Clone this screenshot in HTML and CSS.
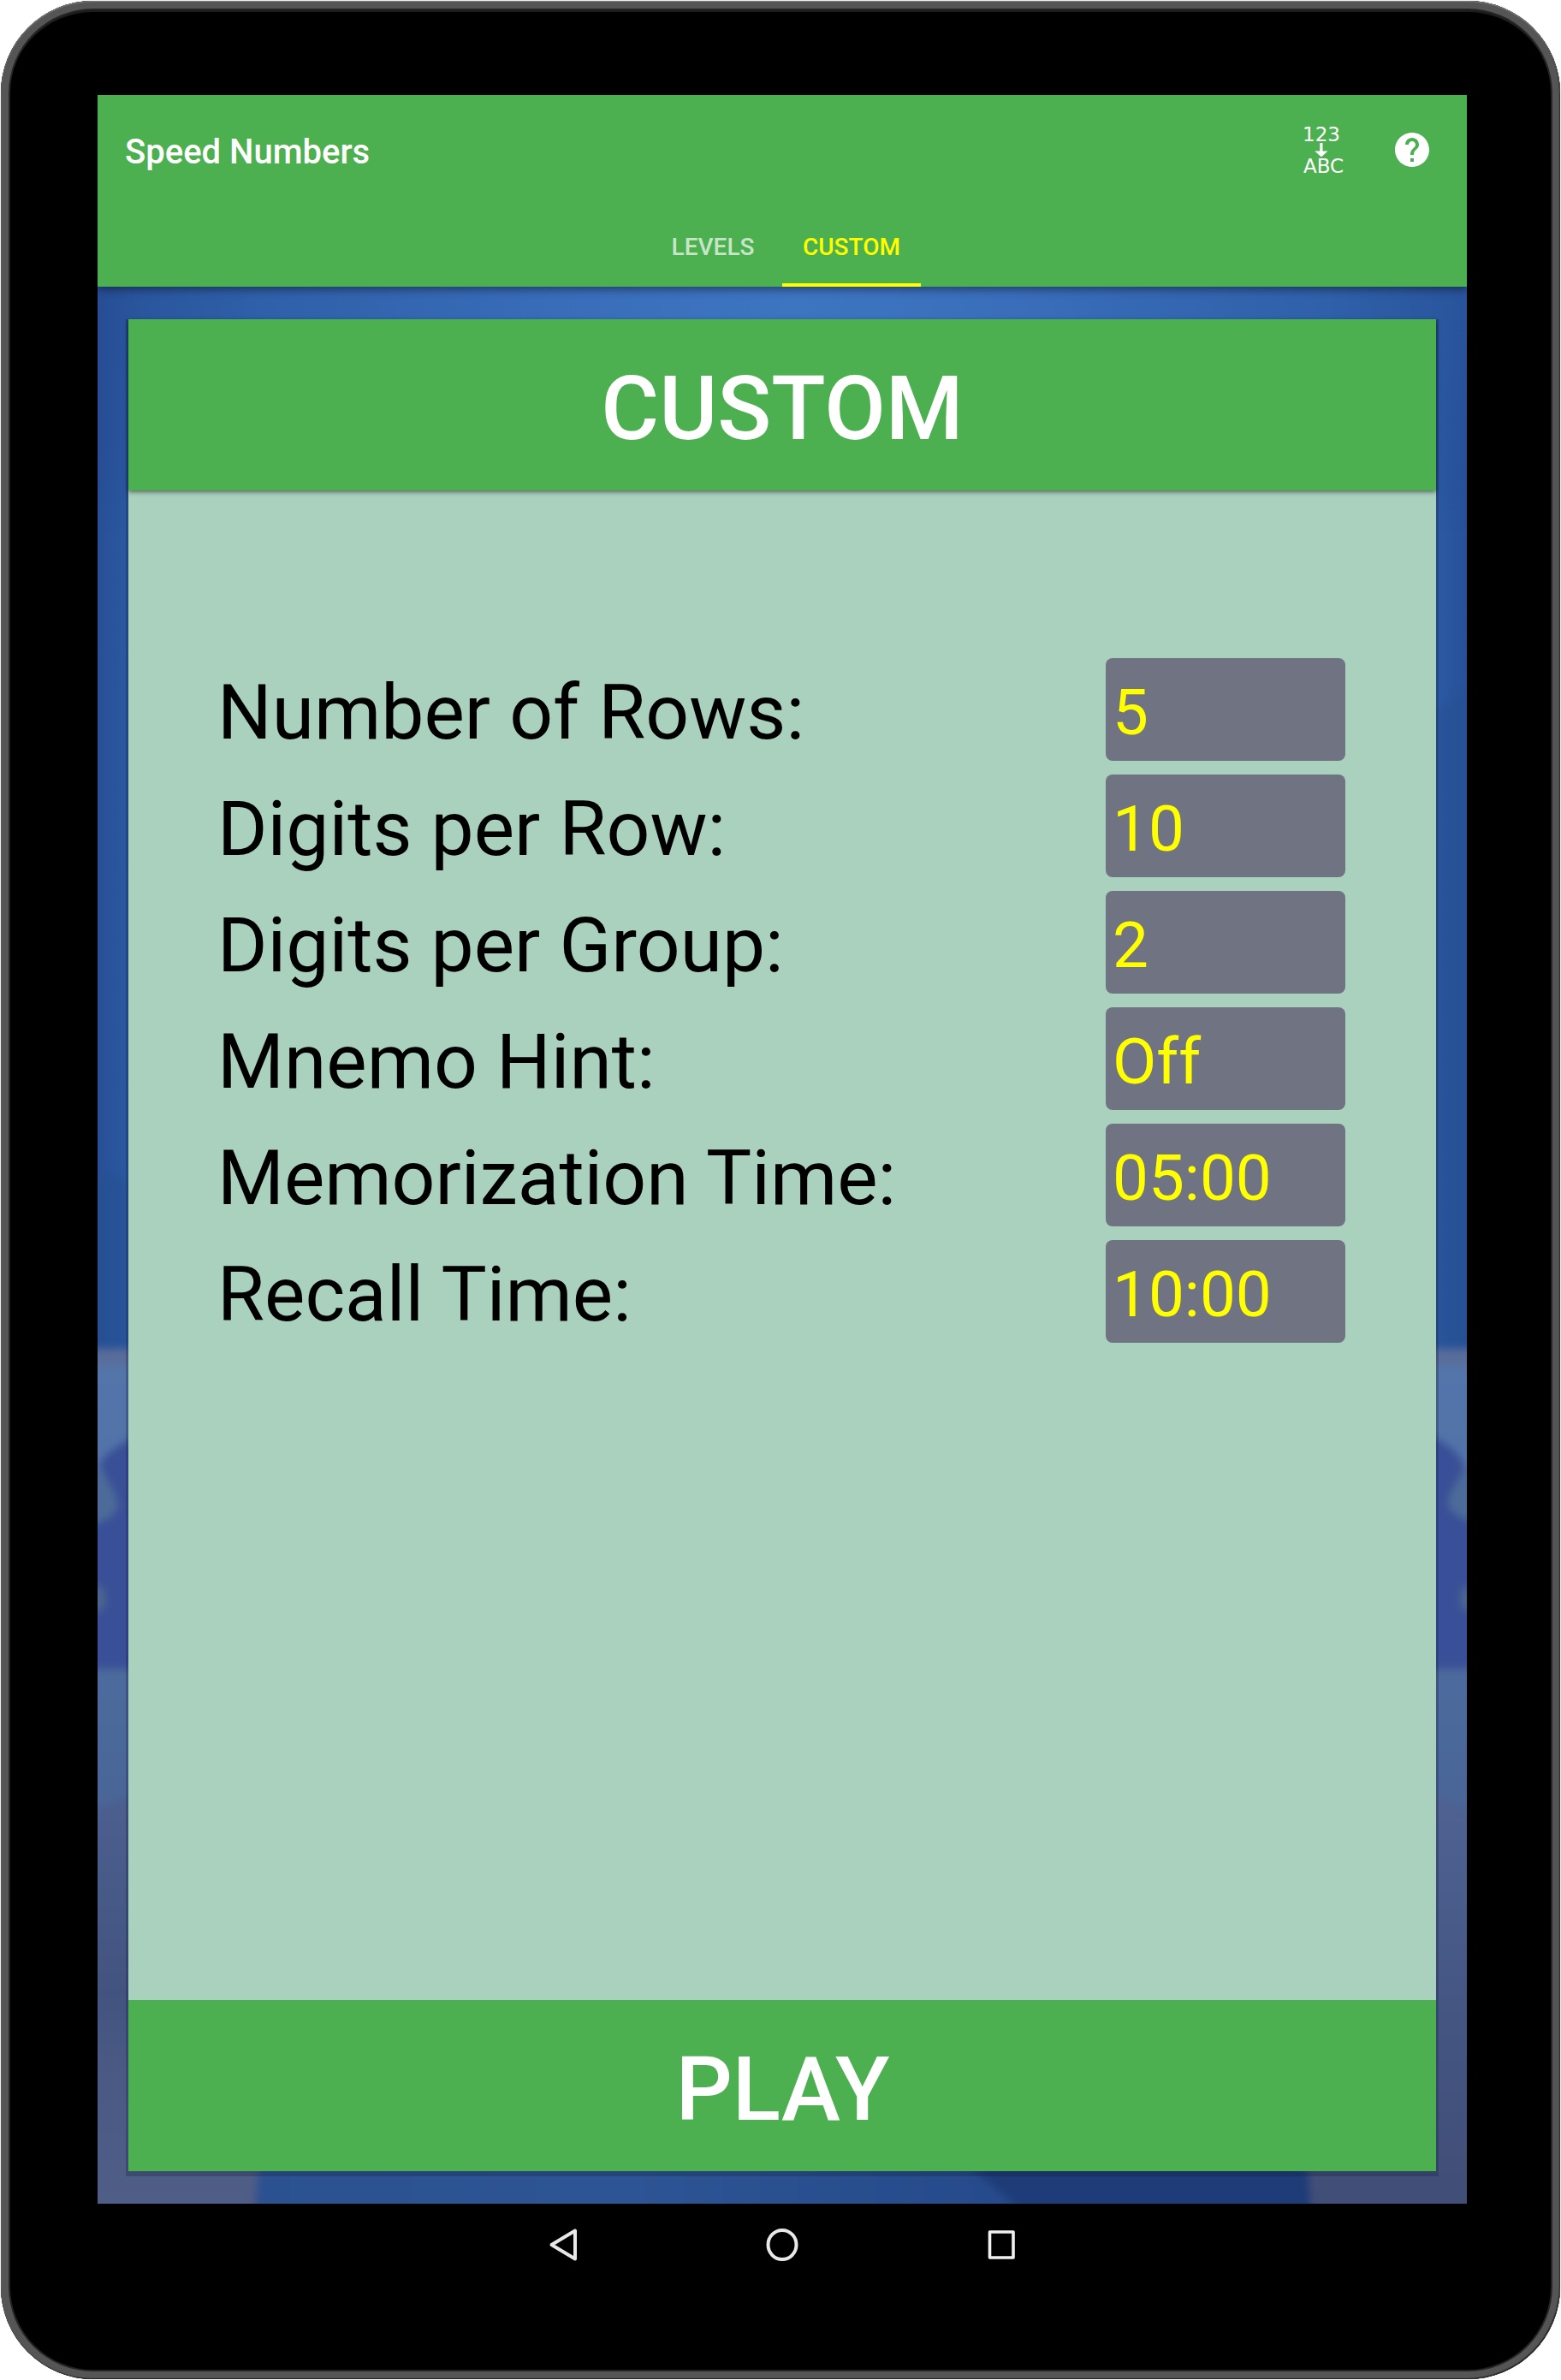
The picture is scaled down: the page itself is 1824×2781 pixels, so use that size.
FILE: index.html
```html
<!DOCTYPE html>
<html lang="en">
<head>
<meta charset="utf-8">
<title>Speed Numbers</title>
<link rel="stylesheet" href="styles.css">
</head>
<body>
<div class="device">
  <div class="screen">
    <header class="appbar">
      <div class="toolbar">
        <h1 class="app-title">Speed Numbers</h1>
        <svg class="icon-mnemo" width="56" height="72" viewBox="0 0 56 72" fill="#fff">
          <text x="3" y="26">123</text>
          <path d="M23.300 28h3.200V37.500h6L24.900 44.500l-7.600-7h6z"/>
          <text x="4" y="63">ABC</text>
        </svg>
        <svg class="icon-help" width="48" height="48" viewBox="0 0 24 24" fill="#fff">
          <path d="M12 2C6.48 2 2 6.48 2 12s4.48 10 10 10 10-4.48 10-10S17.52 2 12 2zm1 17h-2v-2h2v2zm2.070-7.750l-.9.920C13.450 12.900 13 13.500 13 15h-2v-.5c0-1.100.45-2.100 1.170-2.830l1.240-1.260c.37-.36.59-.86.59-1.410 0-1.100-.9-2-2-2s-2 .9-2 2H8c0-2.210 1.790-4 4-4s4 1.790 4 4c0 .88-.36 1.680-.93 2.250z"/>
        </svg>
      </div>
      <nav class="tabs">
        <a class="tab">LEVELS</a>
        <a class="tab tab-active">CUSTOM</a>
      </nav>
    </header>
    <main class="content">
      <svg class="wallpaper" viewBox="114 335 1600 2240" preserveAspectRatio="none">
        <defs>
          <radialGradient id="sky" gradientUnits="userSpaceOnUse" cx="930" cy="350" r="830">
            <stop offset="0" stop-color="#3d75c1"/>
            <stop offset=".3" stop-color="#3a6ebb"/>
            <stop offset=".75" stop-color="#2f60a9"/>
            <stop offset=".92" stop-color="#2a569e"/>
            <stop offset="1" stop-color="#264b92"/>
          </radialGradient>
          <linearGradient id="edge" x1="0" x2="1" y1="0" y2="0">
            <stop offset="0" stop-color="#284f96"/>
            <stop offset=".022" stop-color="#2b59a1"/>
            <stop offset=".978" stop-color="#2c5aa3"/>
            <stop offset="1" stop-color="#275097"/>
          </linearGradient>
          <linearGradient id="skyFade" gradientUnits="userSpaceOnUse" x1="0" x2="0" y1="370" y2="620">
            <stop offset="0" stop-color="#fff"/>
            <stop offset="1" stop-color="#000"/>
          </linearGradient>
          <mask id="skyMask" maskUnits="userSpaceOnUse" x="114" y="335" width="1600" height="300">
            <rect x="114" y="335" width="1600" height="300" fill="url(#skyFade)"/>
          </mask>
          <linearGradient id="ground" x1="0" x2="0" y1="0" y2="1">
            <stop offset="0" stop-color="#5375ab"/>
            <stop offset=".2" stop-color="#5273a8"/>
            <stop offset="1" stop-color="#486394"/>
          </linearGradient>
          <linearGradient id="hill" x1="0" x2="0" y1="0" y2="1">
            <stop offset="0" stop-color="#4c5f8f"/>
            <stop offset=".45" stop-color="#42537f"/>
            <stop offset=".6" stop-color="#495984"/>
            <stop offset="1" stop-color="#515f87"/>
          </linearGradient>
          <linearGradient id="hillRight" x1="0" x2="0" y1="0" y2="1">
            <stop offset="0" stop-color="#4f6292"/>
            <stop offset=".5" stop-color="#445582"/>
            <stop offset="1" stop-color="#404c74"/>
          </linearGradient>
          <linearGradient id="floor" x1="0" x2="1" y1="0" y2="0">
            <stop offset="0" stop-color="#2b5190"/>
            <stop offset=".35" stop-color="#2d5494"/>
            <stop offset=".75" stop-color="#25498a"/>
            <stop offset="1" stop-color="#1d3b77"/>
          </linearGradient>
          <filter id="soft" x="-20%" y="-20%" width="140%" height="140%" color-interpolation-filters="sRGB"><feGaussianBlur stdDeviation="5"/></filter>
        </defs>
        <rect x="114" y="335" width="1600" height="1260" fill="url(#edge)"/>
        <rect x="114" y="335" width="1600" height="300" fill="url(#sky)" mask="url(#skyMask)"/>
        <g filter="url(#soft)">
          <path d="M100 1360 L150 1380 V1600 H100z M1730 800 L1678 830 V1600 H1730z" fill="#265092" opacity=".55"/>
          <rect x="90" y="1576" width="1650" height="600" fill="url(#ground)"/>
          <rect x="90" y="1576" width="1650" height="20" fill="#596d9a"/>
          <path d="M180 1672 C145 1682 114 1700 116 1720 L100 1740 V1950 H180z M1650 1670 C1685 1680 1712 1700 1712 1720 L1730 1740 V1950 H1650z" fill="#394f97"/>
          <path d="M100 1715 H120 C126 1735 138 1742 138 1762 C130 1776 118 1780 100 1782z M1730 1715 H1710 C1702 1735 1690 1745 1692 1760 C1700 1772 1710 1778 1730 1778z" fill="#4c6b99"/>
          <ellipse cx="114" cy="1868" rx="10" ry="16" fill="#4b668f"/>
          <ellipse cx="1714" cy="1868" rx="8" ry="15" fill="#4b678f"/>
        </g>
        <g filter="url(#soft)">
          <path d="M90 2118 Q130 2112 160 2095 H320 V2620 H90z" fill="url(#hill)"/>
          <path d="M1740 2125 Q1700 2110 1670 2095 H1430 V2620 H1740z" fill="url(#hillRight)"/>
          <path d="M306 2500 H1526 Q1528 2540 1534 2620 H294z" fill="url(#floor)"/>
          <path d="M1120 2520 Q1160 2555 1240 2620 H1534 L1524 2500z" fill="#1d3c78"/>
        </g>
      </svg>
      <section class="card">
        <h2 class="card-title">CUSTOM</h2>
        <div class="settings">
          <div class="row"><span class="label">Number of Rows:</span><span class="value">5</span></div>
          <div class="row"><span class="label">Digits per Row:</span><span class="value">10</span></div>
          <div class="row"><span class="label">Digits per Group:</span><span class="value">2</span></div>
          <div class="row"><span class="label">Mnemo Hint:</span><span class="value">Off</span></div>
          <div class="row"><span class="label">Memorization Time:</span><span class="value">05:00</span></div>
          <div class="row"><span class="label">Recall Time:</span><span class="value">10:00</span></div>
        </div>
        <div class="play">PLAY</div>
      </section>
    </main>
  </div>
  <div class="navbar">
    <svg width="34" height="40" viewBox="0 0 34 40" fill="none" stroke="#e8e8e8" stroke-width="4" stroke-linejoin="round"><path d="M31 3.500V36.500L3.500 20z"/></svg>
    <svg width="38" height="40" viewBox="0 0 38 40" fill="none" stroke="#e8e8e8" stroke-width="4"><ellipse cx="19" cy="20" rx="16.500" ry="17"/></svg>
    <svg width="34" height="40" viewBox="0 0 34 40" fill="none" stroke="#f0f0f0" stroke-width="3.600" stroke-linejoin="round"><rect x="3.500" y="5" width="27.500" height="30"/></svg>
  </div>
</div>
</body>
</html>
```
FILE: styles.css
```css
* { box-sizing: border-box; }

body {
  margin: 0;
  background: #fff;
  font-family: Roboto, "Liberation Sans", sans-serif;
}

.device {
  width: 1822px;
  height: 2779px;
  margin: 1px;
  padding: 110px 109px 0 113px;
  border-radius: 108px;
  background: #000;
  box-shadow:
    0 0 0 1px rgba(190, 200, 190, .25),
    inset 0 1px 1px #808480,
    inset -1px -1px 1px #222,
    inset 0 0 0 9px #555,
    inset 0 0 0 11px #242424,
    inset 0 4px 0 9px #1c1c1c;
}

.screen {
  display: flex;
  flex-direction: column;
  width: 1600px;
  height: 2464px;
}

.appbar {
  position: relative;
  z-index: 1;
  height: 224px;
  background: #4caf50;
  box-shadow: 0 3px 10px rgba(0, 0, 0, .45);
}

.toolbar {
  display: flex;
  align-items: center;
  height: 128px;
  padding: 0 40px 0 32px;
}

.app-title {
  flex: 1;
  margin: 6px 0 0;
  font-size: 40px;
  font-weight: 500;
  line-height: 48px;
  color: #fff;
}

.icon-mnemo {
  margin-right: 51px;
  font-family: "DejaVu Sans", sans-serif;
  font-size: 23px;
}

.tabs {
  display: flex;
  justify-content: center;
  height: 96px;
}

.tab {
  width: 162px;
  font-size: 28px;
  font-weight: 500;
  line-height: 100px;
  text-align: center;
  color: rgba(255, 255, 255, .7);
}

.tab-active {
  color: #ff0;
  border-bottom: 4px solid #ff0;
}

.content {
  position: relative;
  flex: 1;
  padding: 38px 36px;
  overflow: hidden;
}

.wallpaper {
  position: absolute;
  inset: 0;
  width: 100%;
  height: 100%;
}

.card {
  position: relative;
  display: flex;
  flex-direction: column;
  height: 2164px;
  background: #aad1be;
  box-shadow: 0 3px 0 3px rgba(20, 30, 60, .28);
}

.card-title,
.play {
  height: 200px;
  margin: 0;
  padding-top: 9px;
  font-size: 104px;
  font-weight: 500;
  line-height: 191px;
  text-align: center;
  color: #fff;
  background: #4caf50;
}

.card-title { box-shadow: 0 2px 5px rgba(0, 0, 0, .5); }

.play { padding-left: 1px; }

.settings {
  display: flex;
  flex: 1;
  flex-direction: column;
  gap: 16px;
  padding: 196px 106px 0 104px;
}

.row {
  display: flex;
  justify-content: space-between;
  height: 120px;
}

.label {
  padding-top: 8px;
  font-size: 89.3px;
  line-height: 112px;
  color: #000;
}

.value {
  width: 280px;
  padding: 7px 8px 0;
  border-radius: 8px;
  background: #707381;
  font-size: 74.6px;
  line-height: 113px;
  color: #ff0;
}

.navbar {
  display: flex;
  gap: 220px;
  width: 546px;
  margin: 28px 0 0 527px;
}
```
